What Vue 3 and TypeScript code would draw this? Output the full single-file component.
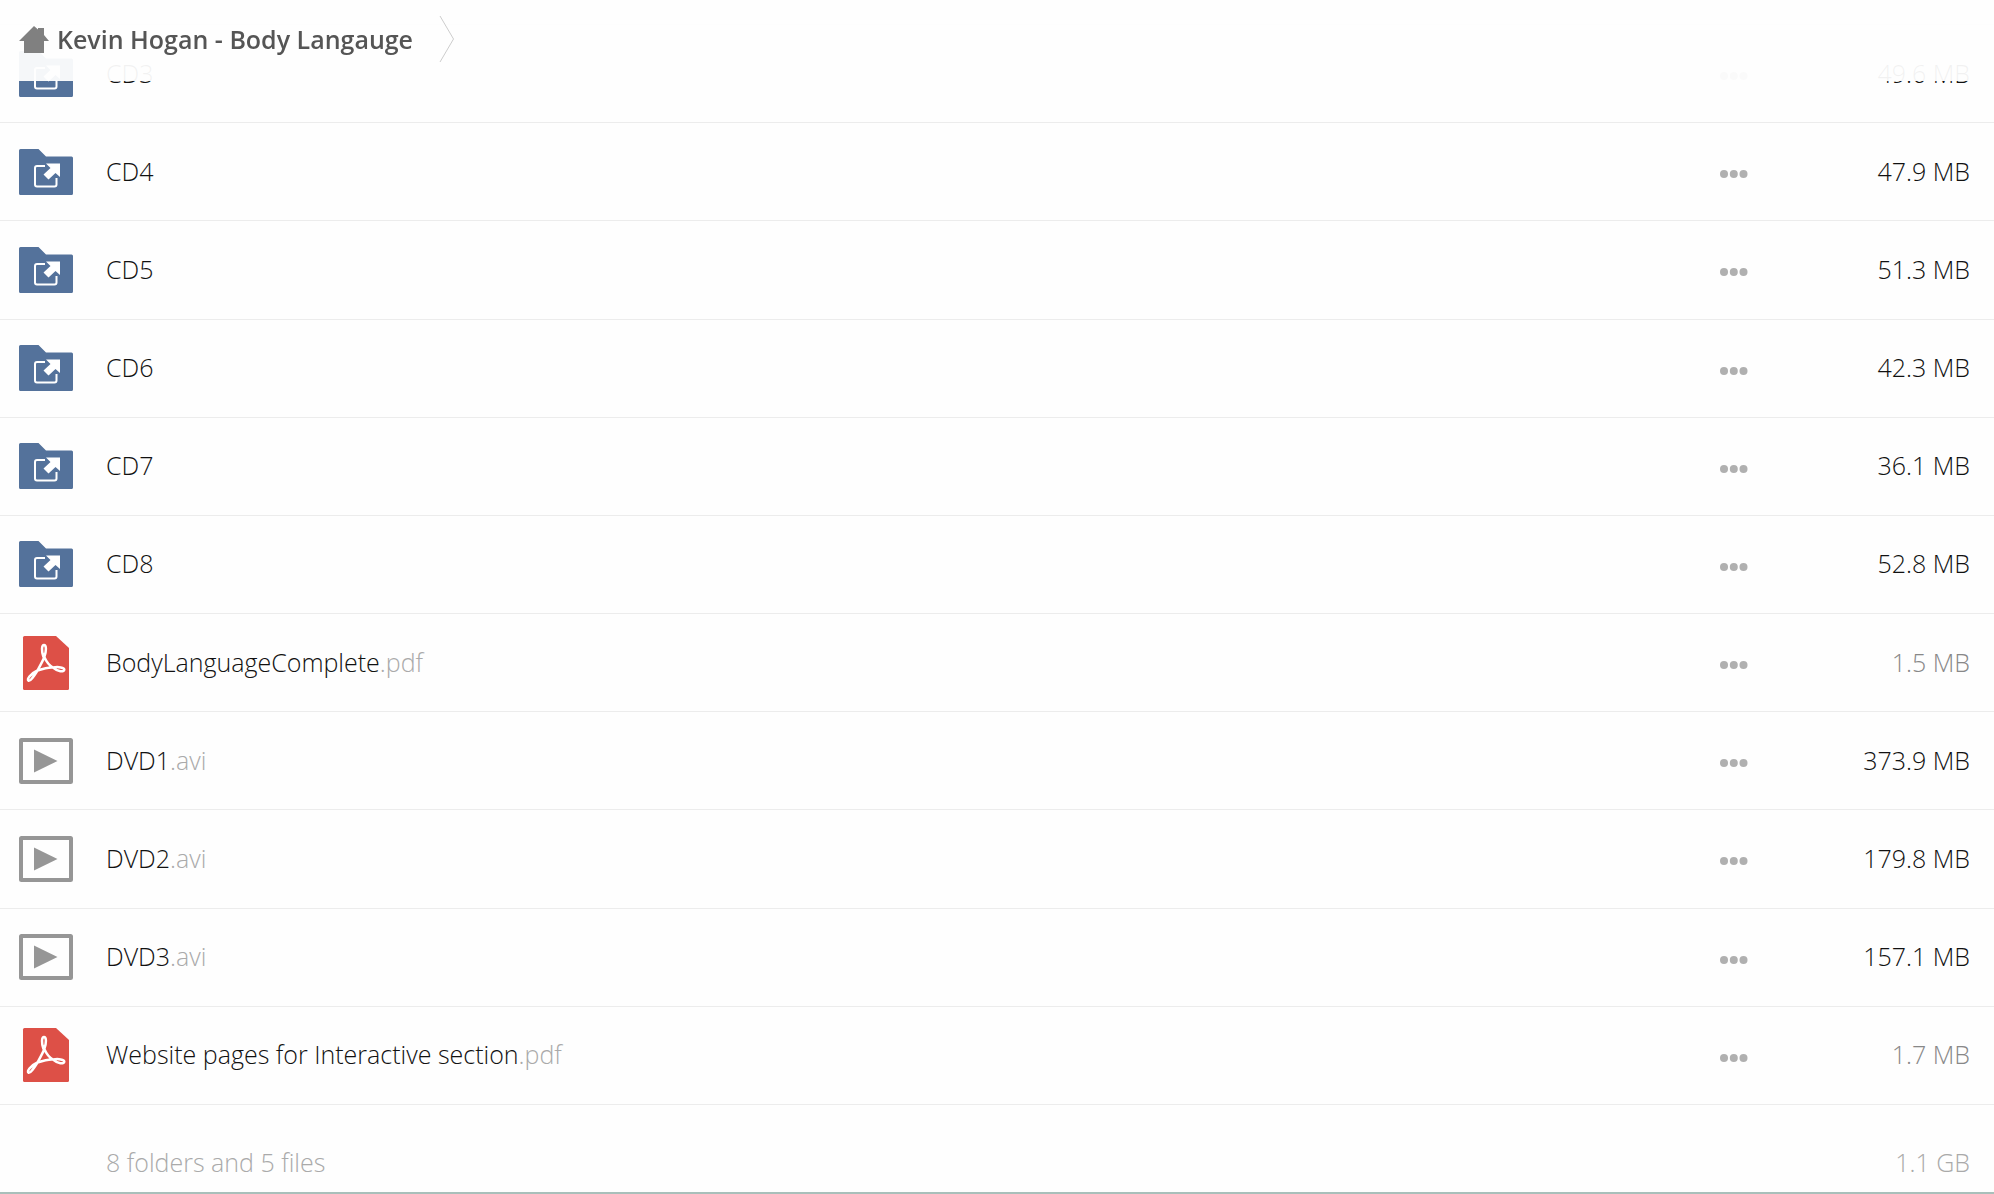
<script setup lang="ts">
type Kind = 'folder' | 'pdf' | 'video'

interface Entry {
  name: string
  ext?: string
  kind: Kind
  size: string
  small?: boolean
}

const entries: Entry[] = [
  { name: 'CD3', kind: 'folder', size: '49.6 MB' },
  { name: 'CD4', kind: 'folder', size: '47.9 MB' },
  { name: 'CD5', kind: 'folder', size: '51.3 MB' },
  { name: 'CD6', kind: 'folder', size: '42.3 MB' },
  { name: 'CD7', kind: 'folder', size: '36.1 MB' },
  { name: 'CD8', kind: 'folder', size: '52.8 MB' },
  { name: 'BodyLanguageComplete', ext: '.pdf', kind: 'pdf', size: '1.5 MB', small: true },
  { name: 'DVD1', ext: '.avi', kind: 'video', size: '373.9 MB' },
  { name: 'DVD2', ext: '.avi', kind: 'video', size: '179.8 MB' },
  { name: 'DVD3', ext: '.avi', kind: 'video', size: '157.1 MB' },
  { name: 'Website pages for Interactive section', ext: '.pdf', kind: 'pdf', size: '1.7 MB', small: true },
]
</script>

<template>
  <div class="page">
    <header class="bar">
      <a class="crumb" href="#">
        <svg class="home" viewBox="0 -2 30 30" aria-hidden="true">
          <path d="M15 0 L19 3.600 V2 H25 V9 L30 15 H25 V27 H5 V15 H0 Z" />
        </svg>
        <span>Kevin Hogan - Body Langauge</span>
      </a>
      <svg class="chevron" viewBox="0 0 16 48" aria-hidden="true">
        <path d="M1 1 L14.500 24 L1 47" />
      </svg>
    </header>

    <main class="content">
      <table class="files">
        <tbody>
          <tr v-for="entry in entries" :key="entry.name">
            <td class="icon-cell">
              <svg v-if="entry.kind === 'folder'" class="icon" viewBox="0 0 56 56" aria-hidden="true">
                <path fill="#54729b" d="M2.500 5 H20.500 L28 12.500 H53.500 Q55 12.500 55 14 V49.500 Q55 51 53.500 51 H2.500 Q1 51 1 49.500 V6.500 Q1 5 2.500 5 Z" />
                <path fill="none" stroke="#fff" stroke-width="2" d="M27 22 H19 Q17 22 17 24 V40.500 Q17 42.500 19 42.500 H36.500 Q38.500 42.500 38.500 40.500 V34" />
                <path fill="#fff" d="M28 19.500 H42 V33 L37.500 29 L30.500 35.500 L25.500 30.500 L32.500 24 Z" />
              </svg>
              <svg v-else-if="entry.kind === 'pdf'" class="icon" viewBox="0 0 56 56" aria-hidden="true">
                <path fill="#dd5047" d="M6.500 1 H38 L51 13 V53.500 Q51 55 49.500 55 H6.500 Q5 55 5 53.500 V2.500 Q5 1 6.500 1 Z" />
                <path
                  fill="none"
                  stroke="#fff"
                  stroke-width="2.500"
                  stroke-linejoin="round"
                  d="M25.500 22 C23.300 16 23.600 10 26 10 C28.500 10 28.500 16 26.300 22 C29 28 32 31 35 32.500 C40.500 31.500 46.300 32.500 46.300 34.800 C46.300 37.500 39.500 36.500 35 32.500 C30 32 24 34 19.500 35.500 C16 41 12.500 46.500 10.500 45.800 C8.500 44.500 12 39 19.500 35.500 C22.500 30 24.800 26 26.300 22"
                />
              </svg>
              <svg v-else class="icon" viewBox="0 0 56 56" aria-hidden="true">
                <rect x="3" y="7" width="50" height="42" rx="0.500" fill="none" stroke="#969696" stroke-width="4" />
                <path fill="#969696" d="M16 16.500 L39.500 28 L16 39.500 Z" />
              </svg>
            </td>
            <td class="name">
              <a href="#">{{ entry.name }}<span v-if="entry.ext" class="ext">{{ entry.ext }}</span></a>
            </td>
            <td class="menu-cell">
              <button class="menu" type="button" :aria-label="`Actions for ${entry.name}`">
                <svg viewBox="0 0 28 8" aria-hidden="true">
                  <circle cx="4" cy="4" r="4" />
                  <circle cx="13.800" cy="4" r="4" />
                  <circle cx="23.500" cy="4" r="4" />
                </svg>
              </button>
            </td>
            <td class="size" :class="{ small: entry.small }">{{ entry.size }}</td>
          </tr>
        </tbody>
      </table>
    </main>

    <footer class="summary">
      <span>8 folders and 5 files</span>
      <span>1.1 GB</span>
    </footer>
  </div>
</template>

<style>
body {
  margin: 0;
  background: #fefefe;
}
</style>

<style scoped>
.page {
  box-sizing: border-box;
  min-height: 100vh;
  padding-top: 24px;
  display: flex;
  flex-direction: column;
  font-family: 'Open Sans', 'Noto Sans', sans-serif;
  font-size: 25px;
  font-weight: 300;
  line-height: 36px;
  color: #111;
}

a {
  color: inherit;
  text-decoration: none;
}

svg {
  display: block;
}

.bar {
  position: fixed;
  top: 0;
  left: 0;
  right: 0;
  z-index: 1;
  box-sizing: border-box;
  height: 81px;
  padding: 0 19px 4px;
  display: flex;
  align-items: center;
  gap: 26px;
  background: rgba(254, 254, 254, 0.95);
}

.crumb {
  display: flex;
  align-items: center;
  gap: 8px;
  font-weight: 600;
  color: #555;
}

.home {
  width: 30px;
  height: 30px;
  fill: #808080;
}

.chevron {
  width: 16px;
  height: 48px;
  fill: none;
  stroke: #ccc;
}

.content {
  flex: 1;
  display: flex;
  border-top: 1px solid #ececec;
}

.files {
  width: 100%;
  border-collapse: separate;
  border-spacing: 0;
}

td {
  box-sizing: border-box;
  height: 97px;
  padding: 0;
  border-bottom: 1px solid #ececec;
  vertical-align: middle;
}

.icon-cell {
  width: 106px;
  padding-left: 18px;
}

.icon {
  width: 56px;
  height: 56px;
}

.name,
.size {
  padding-bottom: 2px;
}

.menu-cell {
  width: 100px;
}

.menu {
  display: block;
  padding: 15px 0 10px;
  border: 0;
  background: none;
}

.menu svg {
  width: 28px;
  height: 8px;
  fill: #b0b0b0;
}

.size {
  width: 174px;
  padding-right: 24px;
  text-align: right;
  white-space: nowrap;
}

.ext {
  color: #aaa;
}

.small {
  color: #888;
}

.summary {
  display: flex;
  justify-content: space-between;
  padding: 39px 24px 12px 106px;
  border-bottom: 2px solid #a9bfba;
  color: #aaa;
}
</style>
